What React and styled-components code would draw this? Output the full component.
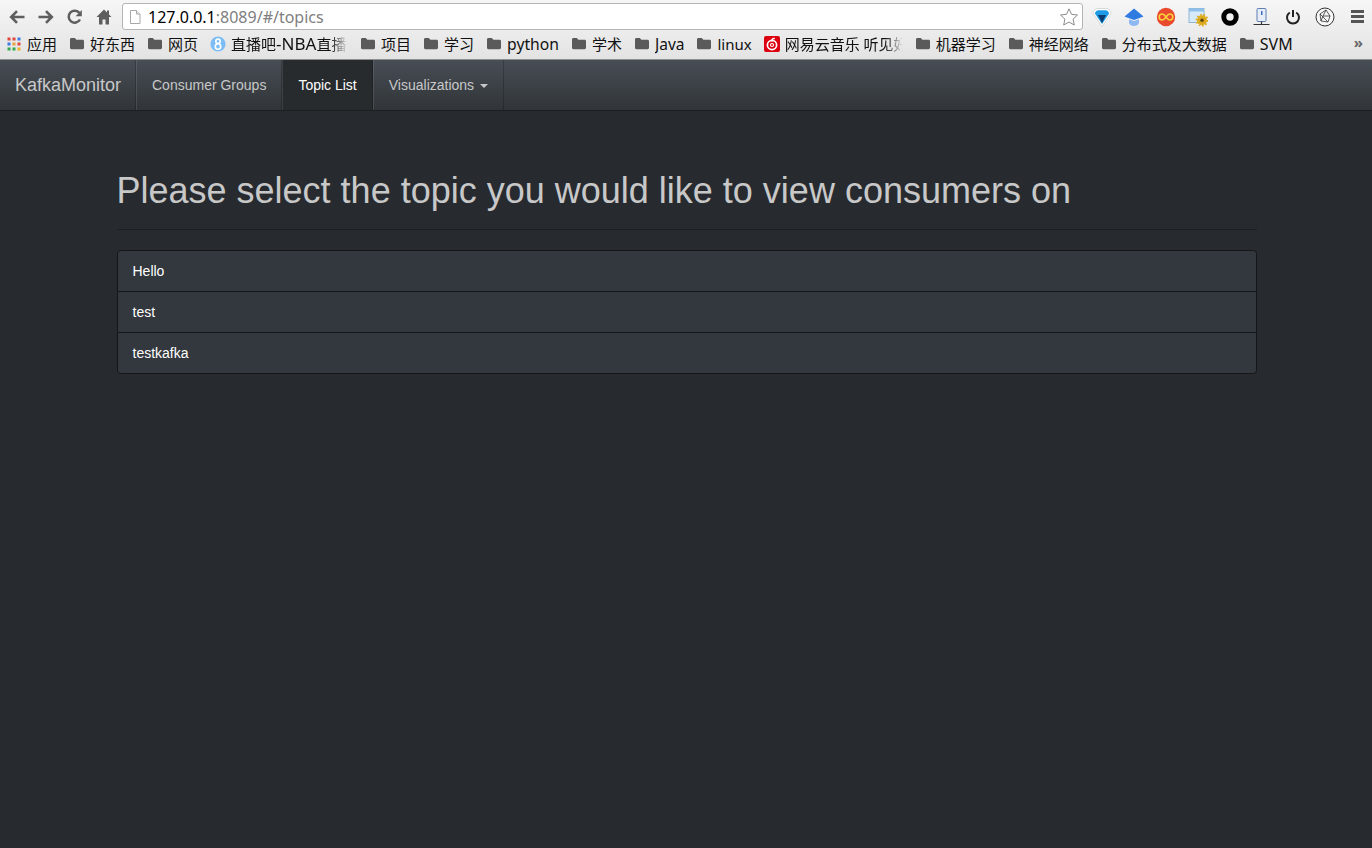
import React from 'react'
import styled, { createGlobalStyle } from 'styled-components'

const GlobalStyle = createGlobalStyle`
  html, body {
    margin: 0;
    padding: 0;
    height: 100%;
    background: #272b30;
  }
  #root {
    min-height: 100%;
  }
`

const Latin = styled.span`
  font-size: ${(p) => p.$size}px;
`

const BOOKMARKS = [
  { id: 'apps', label: '应用', icon: 'apps' },
  { id: 'good', label: '好东西' },
  { id: 'web', label: '网页' },
  { id: 'nba', label: <>直播吧<Latin $size={17}>-NBA</Latin>直播</>, icon: 'eight', width: 117 },
  { id: 'proj', label: '项目' },
  { id: 'study', label: '学习' },
  { id: 'python', label: <Latin $size={15.7}>python</Latin> },
  { id: 'academic', label: '学术' },
  { id: 'java', label: <Latin $size={15.5}>Java</Latin> },
  { id: 'linux', label: <Latin $size={15}>linux</Latin> },
  { id: 'music', label: '网易云音乐 听见好时光', icon: 'music', width: 118 },
  { id: 'ml', label: '机器学习' },
  { id: 'nn', label: '神经网络' },
  { id: 'bigdata', label: '分布式及大数据' },
  { id: 'svm', label: <Latin $size={16}>SVM</Latin> },
]

const TOPICS = ['Hello', 'test', 'testkafka']

const FolderIcon = () => (
  <svg width="16" height="16" viewBox="0 0 16 16">
    <path d="M1 3.5C1 2.7 1.6 2 2.4 2h3.4l1.6 1.8h6.2c.8 0 1.4.6 1.4 1.4v6.6c0 .8-.6 1.4-1.4 1.4H2.4C1.6 13.2 1 12.6 1 11.8z" fill="#5a5a5a" />
  </svg>
)

const AppsIcon = () => {
  const colors = ['#e2463b', '#e2463b', '#3b7de8', '#3b7de8', '#e8a13b', '#e2463b', '#35a853', '#35a853', '#f0b429']
  return (
    <svg width="16" height="16" viewBox="0 0 16 16">
      {colors.map((c, i) => (
        <rect key={i} x={1.5 + (i % 3) * 5} y={1.5 + Math.floor(i / 3) * 5} width="3" height="3" fill={c} />
      ))}
    </svg>
  )
}

const EightIcon = () => (
  <svg width="16" height="16" viewBox="0 0 16 16">
    <circle cx="8" cy="8" r="7.6" fill="#7dbdf5" />
    <circle cx="8" cy="5.3" r="2.2" fill="none" stroke="#fff" strokeWidth="1.6" />
    <circle cx="8" cy="10.5" r="2.7" fill="none" stroke="#fff" strokeWidth="1.6" />
  </svg>
)

const MusicIcon = () => (
  <svg width="16" height="16" viewBox="0 0 16 16">
    <rect width="16" height="16" rx="2" fill="#dd0010" />
    <circle cx="8" cy="9" r="4.6" fill="none" stroke="#fff" strokeWidth="1.7" />
    <circle cx="8" cy="9" r="1.5" fill="none" stroke="#fff" strokeWidth="1.1" />
    <path d="M10.8 2.6C9 2.2 7.6 3 7.8 5.6" fill="none" stroke="#fff" strokeWidth="1.5" />
  </svg>
)

const BOOKMARK_ICONS = { apps: AppsIcon, eight: EightIcon, music: MusicIcon }

const ExtensionIcons = () => (
  <Extensions>
    <svg width="20" height="20" viewBox="0 0 20 20">
      <path d="M1 6.500C1 3.500 3.500 1.500 6 1.500h8c2.500 0 5 2 5 5L10 19.500z" fill="#fff" stroke="#cfcfcf" strokeWidth=".8" />
      <path d="M3 6.800C3 4.500 4.800 3.200 6.500 3.200h7c1.700 0 3.500 1.300 3.500 3.600L10 17z" fill="#1f9ae6" />
      <path d="M6 8h8l-4 8z" fill="#0b3a6e" />
    </svg>
    <svg width="20" height="20" viewBox="0 0 20 20">
      <path d="M10 1.500L19.500 9.500 10 13 .5 9.500z" fill="#2f7be0" />
      <path d="M5 12.300L10 14l5-1.700v3.200a5 3.500 0 0 1-10 0z" fill="#8db8f2" />
    </svg>
    <svg width="20" height="20" viewBox="0 0 20 20">
      <circle cx="10" cy="10" r="9.200" fill="#e9492f" />
      <path d="M10 10c-1.500-2.200-2.600-3-3.800-3a3 3 0 0 0 0 6c1.200 0 2.300-.8 3.800-3s2.600-3 3.800-3a3 3 0 0 1 0 6c-1.200 0-2.300-.8-3.800-3z" fill="none" stroke="#f7d23a" strokeWidth="1.600" />
    </svg>
    <svg width="20" height="20" viewBox="0 0 20 20">
      <rect x="1" y="1.500" width="15" height="14" fill="#d6eafa" stroke="#8fb6d6" />
      <rect x="1" y="1.500" width="15" height="3" fill="#8fc0ea" />
      <circle cx="14" cy="13.200" r="5" fill="#dcaa1c" />
      <circle cx="14" cy="13.200" r="5.600" fill="none" stroke="#dcaa1c" strokeWidth="1.600" strokeDasharray="1.700 1.700" />
      <circle cx="14" cy="13.200" r="1.700" fill="#5f4610" />
    </svg>
    <svg width="20" height="20" viewBox="0 0 20 20">
      <circle cx="10" cy="10" r="6.200" fill="none" stroke="#000" strokeWidth="5" />
    </svg>
    <svg width="20" height="20" viewBox="0 0 20 20">
      <rect x="6" y="1.500" width="9" height="13" rx="1" fill="#e6edf8" stroke="#5f7fb5" />
      <rect x="10" y="4" width="1.500" height="4" fill="#3f6fc0" />
      <path d="M2.500 17.500h16M10.500 14.500v3" stroke="#333" strokeWidth="1.200" />
    </svg>
    <svg width="20" height="20" viewBox="0 0 20 20">
      <path d="M6.800 5.500a6 6 0 1 0 6.400 0" fill="none" stroke="#222" strokeWidth="2" />
      <path d="M10 3v7" stroke="#222" strokeWidth="2" />
    </svg>
    <svg width="20" height="20" viewBox="0 0 20 20">
      <circle cx="10" cy="10" r="9" fill="#f6f6f6" stroke="#333" />
      <path d="M5 7l6-4 4 6-2 6-7-1zM5 7l8 8M11 3l-3 6 7 0M8 9l-2 5" fill="none" stroke="#333" strokeWidth=".8" />
    </svg>
  </Extensions>
)

const ToolbarButtons = () => (
  <>
    <ToolIcon>
      <svg width="18" height="18" viewBox="0 0 18 18">
        <path d="M16.500 9H4M9 3.200L3.200 9 9 14.800" fill="none" stroke="#5e5e5e" strokeWidth="2.600" />
      </svg>
    </ToolIcon>
    <ToolIcon>
      <svg width="18" height="18" viewBox="0 0 18 18">
        <path d="M1.500 9h12.500M9 3.200L14.800 9 9 14.800" fill="none" stroke="#5e5e5e" strokeWidth="2.600" />
      </svg>
    </ToolIcon>
    <ToolIcon>
      <svg width="18" height="18" viewBox="0 0 18 18">
        <path d="M14 11.500A6 6 0 1 1 13.500 5" fill="none" stroke="#5e5e5e" strokeWidth="2.500" />
        <path d="M15.800 2v6.200H9.600z" fill="#5e5e5e" />
      </svg>
    </ToolIcon>
    <ToolIcon>
      <svg width="18" height="18" viewBox="0 0 18 18">
        <path d="M9 1.500L1.500 9h2.500v7.500h3.500v-5h3v5H14V9h2.500L14 6.500V2.500h-2v2z" fill="#5e5e5e" />
      </svg>
    </ToolIcon>
  </>
)

const App = () => {
  return (
    <>
      <GlobalStyle />
      <Chrome>
        <Toolbar>
          <ToolbarButtons />
          <Omnibox>
            <svg width="14" height="16" viewBox="0 0 14 16">
              <path d="M2.500 1.500h6l3.500 3.500v9.500h-9.500z" fill="#fff" stroke="#a8a8a8" />
              <path d="M8.500 1.500V5H12" fill="#eee" stroke="#a8a8a8" />
            </svg>
            <Url>
              127.0.0.1<UrlRest>:8089/#/topics</UrlRest>
            </Url>
            <StarIcon width="20" height="20" viewBox="0 0 20 20">
              <path d="M10 1.800l2.500 5.500 6 .7-4.400 4.100 1.200 5.900-5.300-3-5.300 3 1.200-5.900L1.500 8l6-.7z" fill="#fff" stroke="#8a8a8a" />
            </StarIcon>
          </Omnibox>
          <ExtensionIcons />
          <MenuIcon>
            <span />
            <span />
            <span />
          </MenuIcon>
        </Toolbar>
        <BookmarkBar>
          {BOOKMARKS.map((b) => {
            const Icon = BOOKMARK_ICONS[b.icon] || FolderIcon
            return (
              <Bookmark key={b.id}>
                <Icon />
                <BookmarkLabel $width={b.width}>{b.label}</BookmarkLabel>
              </Bookmark>
            )
          })}
          <MoreMarks>»</MoreMarks>
        </BookmarkBar>
      </Chrome>

      <Navbar>
        <Brand>KafkaMonitor</Brand>
        <NavItem>Consumer Groups</NavItem>
        <NavItem $active>Topic List</NavItem>
        <NavItem>
          Visualizations <Caret />
        </NavItem>
      </Navbar>

      <Container>
        <PageHeader>
          <Title>Please select the topic you would like to view consumers on</Title>
        </PageHeader>
        <ListGroup>
          {TOPICS.map((t) => (
            <ListItem key={t}>{t}</ListItem>
          ))}
        </ListGroup>
      </Container>
    </>
  )
}

const Chrome = styled.div`
  height: 59px;
  background: linear-gradient(#f6f6f6, #e3e3e3);
  border-bottom: 1px solid #8e8e8e;
  font-family: 'Noto Sans', 'Noto Sans CJK SC', sans-serif;
`
const Toolbar = styled.div`
  height: 33px;
  display: flex;
  align-items: center;
  padding-left: 2px;
`
const ToolIcon = styled.div`
  width: 29px;
  display: flex;
  justify-content: center;
`
const Omnibox = styled.div`
  box-sizing: border-box;
  width: 961px;
  height: 27px;
  margin-left: 4px;
  padding: 0 3px 0 5px;
  display: flex;
  align-items: center;
  gap: 6px;
  background: #fff;
  border: 1px solid #b4b4b4;
  border-radius: 3px;
`
const Url = styled.div`
  flex: 1;
  font-size: 16px;
  color: #000;
`
const UrlRest = styled.span`
  color: #808080;
`
const StarIcon = styled.svg`
  flex: none;
`
const Extensions = styled.div`
  display: flex;
  gap: 11.900px;
  margin-left: 9px;
`
const MenuIcon = styled.div`
  width: 13px;
  margin-left: 16px;
  display: flex;
  flex-direction: column;
  gap: 2px;

  span {
    height: 3px;
    background: #555;
  }
`
const BookmarkBar = styled.div`
  height: 22px;
  padding-left: 6px;
  display: flex;
  align-items: center;
  gap: 12px;
  position: relative;
`
const Bookmark = styled.div`
  display: flex;
  align-items: center;
  gap: 5px;
`
const BookmarkLabel = styled.div`
  font-size: 15px;
  line-height: 20px;
  color: #111;
  white-space: nowrap;
  overflow: hidden;
  ${(p) => p.$width && `
    width: ${p.$width}px;
    -webkit-mask-image: linear-gradient(to right, #000 85%, transparent);
    mask-image: linear-gradient(to right, #000 85%, transparent);
  `}
`
const MoreMarks = styled.div`
  position: absolute;
  right: 9px;
  top: -1px;
  font-size: 15px;
  font-weight: bold;
  color: #666;
`
const Navbar = styled.nav`
  box-sizing: border-box;
  height: 51px;
  display: flex;
  background: linear-gradient(#484e55, #3a3f44 60%, #313539);
  border-bottom: 1px solid #1c1e22;
  font-family: 'Liberation Sans', Arial, sans-serif;
`
const Brand = styled.a`
  padding: 0 15px;
  width: 136px;
  box-sizing: border-box;
  font-size: 18px;
  line-height: 50px;
  color: #c8c8c8;
  border-right: 1px solid rgba(0, 0, 0, 0.2);
`
const NavItem = styled.a`
  padding: 0 15px;
  font-size: 14px;
  line-height: 50px;
  color: ${(p) => (p.$active ? '#fff' : '#c8c8c8')};
  background: ${(p) => (p.$active ? '#272b2e' : 'transparent')};
  border-left: 1px solid rgba(255, 255, 255, 0.1);
  border-right: 1px solid rgba(0, 0, 0, 0.2);
`
const Caret = styled.span`
  display: inline-block;
  margin-left: 2px;
  vertical-align: middle;
  border-top: 4px solid #c8c8c8;
  border-left: 4px solid transparent;
  border-right: 4px solid transparent;
`
const Container = styled.main`
  box-sizing: border-box;
  width: 1170px;
  margin-left: 101.5px;
  padding: 60px 15px 0;
  font-family: 'Liberation Sans', Arial, sans-serif;
`
const PageHeader = styled.div`
  padding-bottom: 8px;
  margin-bottom: 20px;
  border-bottom: 1px solid #1c1e22;
`
const Title = styled.h1`
  margin: 0 0 10px;
  font-size: 36px;
  font-weight: 500;
  line-height: 1.1;
  color: #c8c8c8;
`
const ListGroup = styled.div`
  border-radius: 4px;
  overflow: hidden;
`
const ListItem = styled.a`
  display: block;
  padding: 10px 15px;
  margin-bottom: -1px;
  font-size: 14px;
  line-height: 20px;
  color: #fff;
  background: #32383e;
  border: 1px solid rgba(0, 0, 0, 0.6);

  &:first-child {
    border-radius: 4px 4px 0 0;
  }
  &:last-child {
    margin-bottom: 0;
    border-radius: 0 0 4px 4px;
  }
`

export default App
